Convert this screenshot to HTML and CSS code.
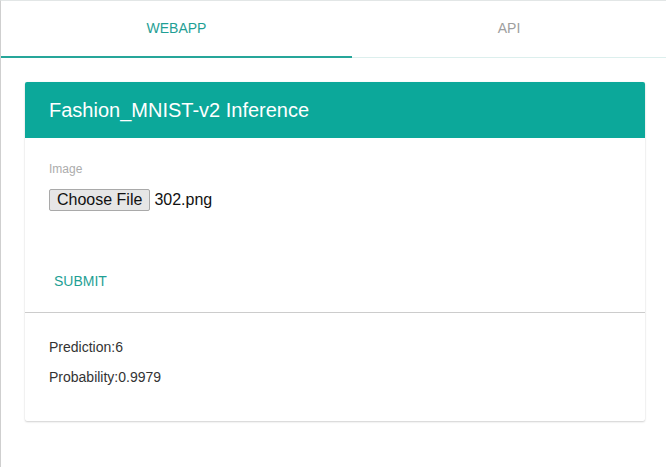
FILE: index.html
```html
<!DOCTYPE html>
<html>
<head>
<meta charset="utf-8">
<link rel="stylesheet" href="styles.css">
</head>
<body>
<div class="page">
  <nav class="tabs">
    <div class="tab tab-active">WEBAPP</div>
    <div class="tab">API</div>
  </nav>
  <main class="main">
    <section class="card">
      <header class="card-header">Fashion_MNIST-v2 Inference</header>
      <form class="card-form">
        <label class="field-label">Image</label>
        <div class="file-row">
          <span class="file-btn">Choose File</span>
          <span class="file-name">302.png</span>
        </div>
        <div class="submit-row">
          <span class="submit-btn">SUBMIT</span>
        </div>
      </form>
      <div class="card-result">
        <p class="result-line">Prediction:6</p>
        <p class="result-line">Probability:0.9979</p>
      </div>
    </section>
  </main>
</div>
</body>
</html>
```

FILE: styles.css
```css
html, body {
  margin: 0;
  padding: 0;
  background: #ffffff;
}
body {
  font-family: "Liberation Sans", Arial, sans-serif;
}
.page {
  min-height: 467px;
  box-sizing: border-box;
  border-left: 1px solid #cfcfcf;
  border-top: 1px solid #e2e6e6;
}
.tabs {
  display: flex;
  height: 56px;
  border-bottom: 1px solid #dcefed;
}
.tab {
  display: flex;
  align-items: center;
  justify-content: center;
  font-size: 14px;
  color: #9e9e9e;
  box-sizing: border-box;
  padding-bottom: 2px;
}
.tab:first-child {
  width: 351px;
}
.tab:last-child {
  flex: 1;
}
.tab-active {
  color: #1f9f95;
  border-bottom: 2px solid #26a69a;
  margin-bottom: -1px;
}
.main {
  padding: 24px 21px 0 24px;
}
.card {
  background: #fff;
  border-radius: 2px;
  box-shadow: 0 1px 2px rgba(0,0,0,0.18), 0 0 1px rgba(0,0,0,0.08);
}
.card-header {
  height: 56px;
  background: #0ca89a;
  color: #ffffff;
  font-size: 20px;
  display: flex;
  align-items: center;
  padding-left: 24px;
  border-radius: 2px 2px 0 0;
}
.card-form {
  margin: 0;
  padding: 24px 24px 13px 24px;
  border-bottom: 1px solid #cccccc;
}
.field-label {
  display: block;
  font-size: 12px;
  line-height: 14px;
  color: #acacac;
  margin-bottom: 13px;
}
.file-row {
  display: flex;
  align-items: center;
  height: 22px;
}
.file-btn {
  font-size: 16px;
  color: #111;
  background: #e6e6e6;
  border: 1px solid #a9a9a9;
  border-radius: 2px;
  height: 22px;
  box-sizing: border-box;
  padding: 0 7px;
  display: flex;
  align-items: center;
}
.file-name {
  font-size: 16px;
  color: #111;
  margin-left: 4px;
}
.submit-row {
  margin-top: 52px;
  display: flex;
}
.submit-btn {
  height: 36px;
  display: flex;
  align-items: center;
  padding: 0 5px;
  font-size: 14px;
  color: #1f9f95;
}
.card-result {
  padding: 24px 24px 34px 24px;
}
.result-line {
  margin: 0;
  font-size: 14px;
  line-height: 20px;
  color: #333333;
}
.result-line + .result-line {
  margin-top: 10px;
}
```
